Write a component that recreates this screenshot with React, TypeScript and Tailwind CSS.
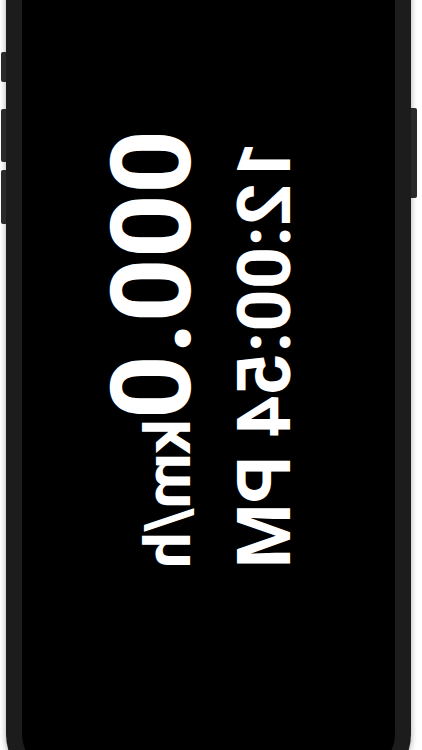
import React from 'react';

const font = "font-['Roboto','Liberation_Sans',sans-serif]";

function SideButtons() {
  return (
    <>
      <div className="absolute left-[-5px] top-[144px] h-[30px] w-[5px] rounded-l-[2px] bg-[#2a2a2a]" />
      <div className="absolute left-[-5px] top-[201px] h-[53px] w-[5px] rounded-l-[2px] bg-[#2a2a2a]" />
      <div className="absolute left-[-5px] top-[262px] h-[54px] w-[5px] rounded-l-[2px] bg-[#2a2a2a]" />
      <div className="absolute right-[-6px] top-[200px] h-[90px] w-[6px] rounded-r-[2px] bg-[#2a2a2a]" />
    </>
  );
}

export default function App() {
  return (
    <div className="relative h-[750px] w-[422px] overflow-hidden bg-white">
      <div className="relative ml-[6px] -mt-[92px] h-[882px] w-[405px] rounded-[56px] bg-[#1c1c1c] p-[16px] shadow-[0_0_6px_rgba(0,0,0,0.35)]">
        <SideButtons />
        <div className="flex h-full w-full items-center justify-center rounded-[40px] bg-black">
          {/* HUD text: rotated and mirrored so it reads in the windshield */}
          <div className={`mr-[18px] flex flex-col items-end text-white ${font} [transform:matrix(0,1,1,0,0,0)]`}>
            <div className="flex items-baseline font-bold leading-none">
              <span className="text-[112px]">000.0</span>
              <span className="text-[64px]">km/h</span>
            </div>
            <div className="mt-[20px] text-[74px] font-bold leading-none">12:00:54 PM</div>
          </div>
        </div>
      </div>
    </div>
  );
}
